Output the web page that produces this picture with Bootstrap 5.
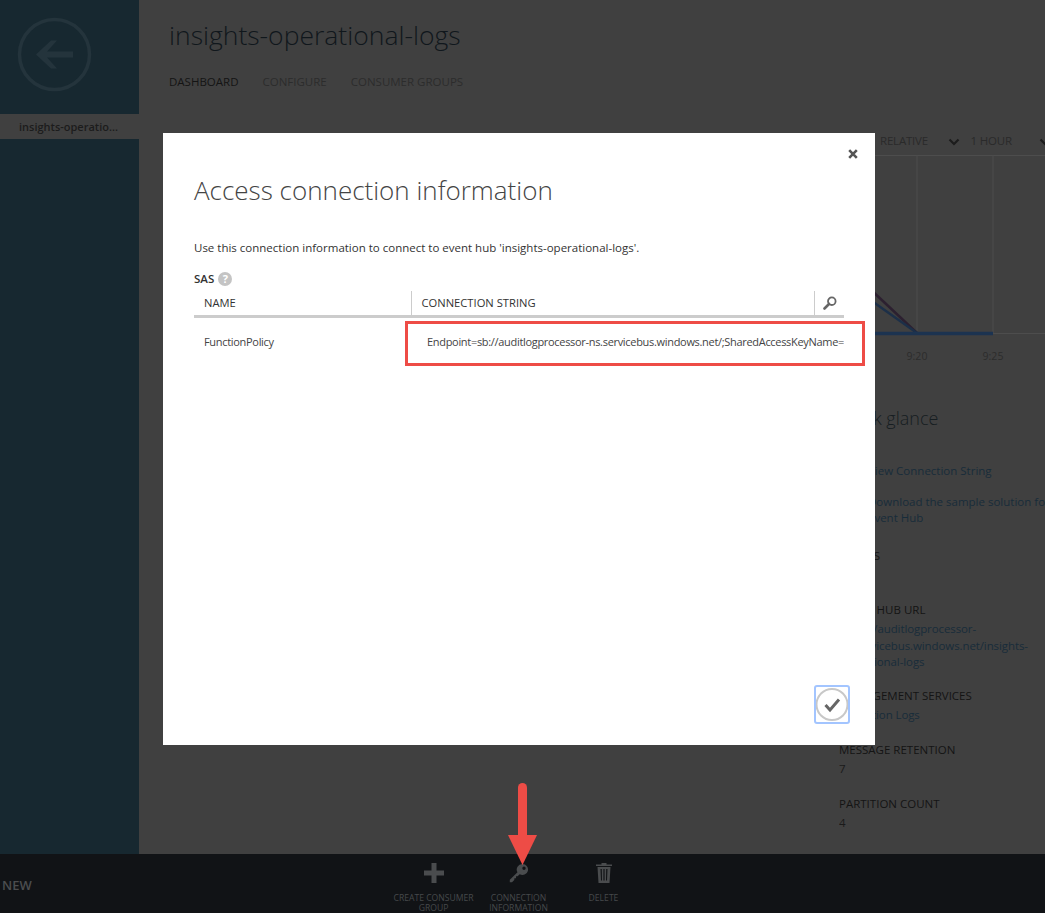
<!DOCTYPE html>
<html lang="en">
<head>
<meta charset="utf-8">
<title>insights-operational-logs</title>
<link href="https://cdn.jsdelivr.net/npm/bootstrap@5.3.0/dist/css/bootstrap.min.css" rel="stylesheet">
<style>
html,body{height:913px;overflow:hidden}
body{background:#404040;font-family:"Open Sans","Noto Sans",sans-serif;font-size:11.5px;color:#222;position:relative}
.shell{height:854px}
.side{width:139px;background:#172830;flex:none}
.back-wrap{height:114px}
.side-tab{height:25px;background:#404040;color:#1c1c1c;font-weight:600;font-size:11px;line-height:25px;padding-left:19px}
.mid{width:700px;flex:none;padding:0 0 0 30px}
.page-title{font-size:26.5px;font-weight:300;line-height:36px;margin:17px 0 0;color:#10171c}
.tabs-row{margin-top:21px;gap:24px;line-height:16px;color:#2c2c2c}
.tabs-row .on{color:#141414}
.right-col{width:206px;flex:none;overflow:hidden;white-space:nowrap}
.filter-row{height:155px;padding:134px 0 0 41px;line-height:14px;color:#2a2a2a;letter-spacing:-.2px}
.filter-row span{display:inline-block}
.chev1{margin:0 17px 0 0}
.chart{display:block}
.glance{font-size:18px;font-weight:300;line-height:26px;margin:40px 0 0;color:#161d21}
.glance-link,.glance-link:hover{display:block;color:#182c3a;line-height:16.5px;margin-left:29px;text-decoration:none}
.lbl{color:#141414;line-height:16px;height:16px}
.val{color:#1a1a1a;line-height:16.5px;margin-top:3px}
.val-link{color:#182c3a;letter-spacing:-.1px}
.bar{height:59px;background:#111316;position:relative}
.new-lbl{position:absolute;left:2px;top:22px;font-size:13px;font-weight:600;line-height:18px;color:#4b4d4f}
.cmds{width:255px;margin-left:391px;padding-top:9px}
.cmd{width:85px;text-align:center;font-size:8.6px;line-height:9.500px;color:#46494b}
.cmd svg{display:block;margin:0 auto 11px}
.dlg{position:absolute;left:163px;top:133px;width:712px;height:612px;background:#fff;padding:0 31px;color:#333}
.close-row{height:29px;padding-top:16px;margin-right:-14px}
.dlg-title{font-size:26px;font-weight:300;line-height:36px;margin:10px 0 0;color:#444}
.dlg-intro{margin:32px 0 0;line-height:16px;color:#333}
.sas{margin:15px 0 0;line-height:16px;font-weight:600;color:#333;gap:4px}
.help{width:14px;height:14px;border-radius:50%;background:#c4c4c4;color:#fff;font-size:11px;font-weight:700;line-height:14px;text-align:center;display:inline-block}
.conn-table{width:650px;margin:4px 0 0;table-layout:fixed;font-size:11.5px}
.conn-table th{height:25px;padding:0 0 0 10px;font-weight:500;font-size:11.2px;border-bottom:3px solid #ccc;color:#333;vertical-align:middle;line-height:20px}
.conn-table th+th{border-left:1px solid #ccc}
.conn-table th:last-child{padding-left:8px}
.conn-table td{padding:16px 0 0 10px;border:0;color:#444;line-height:16px;white-space:nowrap;overflow:hidden;font-size:11px;letter-spacing:-.31px}
.conn-table td+td{padding-left:16px}
.check-wrap{margin-top:auto;margin-bottom:21px;margin-right:-6px}
.check-btn{width:36px;height:39px;padding:0;border:2px solid #a3c5ff;border-radius:3px;background:#fff;display:block}
.red-box{position:absolute;left:242px;top:188px;width:460px;height:45px;border:3px solid #ee4c46;pointer-events:none}
.arrow{position:absolute;left:500px;top:780px}
</style>
</head>
<body>
<div class="shell d-flex">
  <aside class="side">
    <div class="back-wrap">
      <svg width="108" height="108" viewBox="0 0 108 108" class="d-block"><circle cx="54.500" cy="54.500" r="35" fill="none" stroke="#24343c" stroke-width="3.500"/><path d="M73 51.500H47l10-11h-6L36 54.500l15 14h6l-10-11h26z" fill="#24343c"/></svg>
    </div>
    <div class="side-tab">insights-operatio...</div>
  </aside>
  <main class="mid">
    <h1 class="page-title">insights-operational-logs</h1>
    <div class="tabs-row d-flex">
      <span class="on">DASHBOARD</span><span>CONFIGURE</span><span>CONSUMER GROUPS</span>
    </div>
  </main>
  <section class="right-col">
    <div class="filter-row">
      <span class="chev1">RELATIVE</span>
      <svg width="12" height="8" viewBox="0 0 12 8" class="me-2"><path d="M1.500 1.500 6 6l4.500-4.500" fill="none" stroke="#1c1c1c" stroke-width="2.200"/></svg>
      <span>1 HOUR</span>
      <svg width="12" height="8" viewBox="0 0 12 8" class="ms-4"><path d="M1.500 1.500 6 6l4.500-4.500" fill="none" stroke="#1c1c1c" stroke-width="2.200"/></svg>
    </div>
    <svg class="chart" width="206" height="210" viewBox="0 0 206 210">
      <path d="M0 .5H206M0 178.500H206" stroke="#4d4d4d" fill="none"/>
      <path d="M78 0V179M154 0V179" stroke="#4d4d4d" fill="none"/>
      <path d="M30 133 78 178" stroke="#2c2030" stroke-width="2.500" fill="none"/>
      <path d="M30 144 78 178" stroke="#1c2f48" stroke-width="2.500" fill="none"/>
      <path d="M30 178.500H154" stroke="#1c3350" stroke-width="3.500" fill="none"/>
      <text x="78" y="205" text-anchor="middle" font-size="10.500" fill="#2c2c2c" font-family="Open Sans, sans-serif">9:20</text>
      <text x="154" y="205" text-anchor="middle" font-size="10.500" fill="#2c2c2c" font-family="Open Sans, sans-serif">9:25</text>
    </svg>
    <div class="glance">quick glance</div>
    <a class="glance-link" style="margin-top:32px">View Connection String</a>
    <a class="glance-link" style="margin-top:14px">Download the sample solution for</a>
    <a class="glance-link">Event Hub</a>
    <div class="lbl" style="margin-top:21px">STATUS</div>
    <div class="val">Active</div>
    <div class="lbl" style="margin-top:19px">EVENT HUB URL</div>
    <div class="val val-link">https://auditlogprocessor-<br>ns.servicebus.windows.net/insights-<br>operational-logs</div>
    <div class="lbl" style="margin-top:17px">MANAGEMENT SERVICES</div>
    <div class="val val-link">Operation Logs</div>
    <div class="lbl" style="margin-top:19px">MESSAGE RETENTION</div>
    <div class="val">7</div>
    <div class="lbl" style="margin-top:18px">PARTITION COUNT</div>
    <div class="val">4</div>
  </section>
</div>
<footer class="bar">
  <div class="new-lbl">NEW</div>
  <div class="cmds d-flex">
    <div class="cmd"><svg width="20" height="20" viewBox="0 0 20 20"><path d="M7.500 0h5v7.500H20v5h-7.500V20h-5v-7.500H0v-5h7.500z" fill="#4a4c4e"/></svg>CREATE CONSUMER GROUP</div>
    <div class="cmd"><svg width="20" height="20" viewBox="0 0 20 20"><path fill-rule="evenodd" d="M13.500 1a5.500 5.500 0 1 1-2.800 10.200L8.600 13.300 7 13.200l.1 2-1.700.1-.1 1.800L3 19.200H.8v-2.400l7.700-7.500A5.500 5.500 0 0 1 13.500 1zm1.500 2.500a1.700 1.700 0 1 0 0 3.400 1.700 1.700 0 0 0 0-3.400z" fill="#4a4c4e"/></svg>CONNECTION INFORMATION</div>
    <div class="cmd"><svg width="16" height="20" viewBox="0 0 16 20"><path fill-rule="evenodd" d="M5.500 0h5v1.500H16V3H0V1.500h5.500zM1.500 4h13L13.500 20h-11zM4.500 6l.5 11.500h1L5.800 6zM7.400 6v11.500h1.200V6zM10.200 6 10 17.500h1L11.500 6z" fill="#4a4c4e"/></svg>DELETE</div>
  </div>
</footer>

<div class="dlg d-flex flex-column">
  <div class="close-row d-flex justify-content-end">
    <svg width="10" height="10" viewBox="0 0 10 10"><path d="M1.200 1.200l7.600 7.600M8.800 1.200 1.200 8.800" stroke="#555" stroke-width="2.600" fill="none"/></svg>
  </div>
  <h2 class="dlg-title">Access connection information</h2>
  <p class="dlg-intro">Use this connection information to connect to event hub 'insights-operational-logs'.</p>
  <div class="sas d-flex align-items-center">SAS <span class="help">?</span></div>
  <table class="table conn-table">
    <colgroup><col style="width:217px"><col style="width:403px"><col style="width:30px"></colgroup>
    <thead>
      <tr><th>NAME</th><th>CONNECTION STRING</th><th>
        <svg width="14" height="14" viewBox="0 0 14 14" class="d-block"><circle cx="8.800" cy="5.200" r="3.800" fill="none" stroke="#666" stroke-width="1.800"/><path d="M6 8 1.500 12.500" stroke="#666" stroke-width="2.600" fill="none" stroke-linecap="round"/></svg>
      </th></tr>
    </thead>
    <tbody>
      <tr><td>FunctionPolicy</td><td colspan="2">Endpoint=sb://auditlogprocessor-ns.servicebus.windows.net/;SharedAccessKeyName=</td></tr>
    </tbody>
  </table>
  <div class="check-wrap align-self-end">
    <button type="button" class="check-btn" aria-label="OK">
      <svg width="32" height="35" viewBox="0 0 32 35" class="d-block"><circle cx="16" cy="17.500" r="15.500" fill="none" stroke="#c8c8c8" stroke-width="2"/><path d="M9.500 18l4.500 5 9-10.500" fill="none" stroke="#666" stroke-width="3"/></svg>
    </button>
  </div>
  <div class="red-box"></div>
</div>

<svg class="arrow" width="44" height="88" viewBox="0 0 44 88"><path d="M22.500 7.500V58" stroke="#ee4c46" stroke-width="9" stroke-linecap="round" fill="none"/><path d="M8 55h29L22.500 85z" fill="#ee4c46"/></svg>
</body>
</html>
